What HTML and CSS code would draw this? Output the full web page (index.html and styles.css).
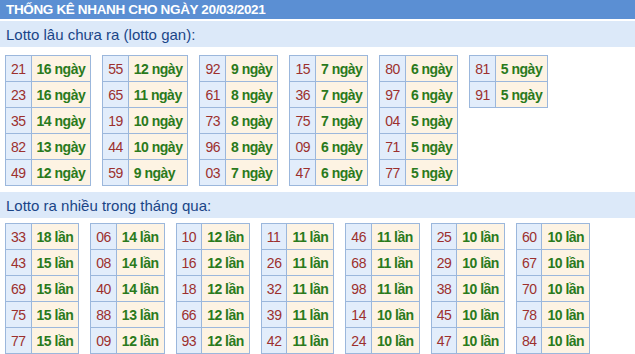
FILE: index.html
```html
<!DOCTYPE html>
<html lang="vi">
<head>
<meta charset="utf-8">
<title>Thống kê nhanh</title>
<link rel="stylesheet" href="styles.css">
</head>
<body>
<div class="header">THỐNG KÊ NHANH CHO NGÀY 20/03/2021</div>
<div class="band">Lotto lâu chưa ra (lotto gan):</div>
<div class="tables tables-gan">
  <table><tr><td class="n">21</td><td class="v">16 ngày</td></tr><tr><td class="n">23</td><td class="v">16 ngày</td></tr><tr><td class="n">35</td><td class="v">14 ngày</td></tr><tr><td class="n">82</td><td class="v">13 ngày</td></tr><tr><td class="n">49</td><td class="v">12 ngày</td></tr></table>
  <table><tr><td class="n">55</td><td class="v">12 ngày</td></tr><tr><td class="n">65</td><td class="v">11 ngày</td></tr><tr><td class="n">19</td><td class="v">10 ngày</td></tr><tr><td class="n">44</td><td class="v">10 ngày</td></tr><tr><td class="n">59</td><td class="v">9 ngày</td></tr></table>
  <table><tr><td class="n">92</td><td class="v">9 ngày</td></tr><tr><td class="n">61</td><td class="v">8 ngày</td></tr><tr><td class="n">73</td><td class="v">8 ngày</td></tr><tr><td class="n">96</td><td class="v">8 ngày</td></tr><tr><td class="n">03</td><td class="v">7 ngày</td></tr></table>
  <table><tr><td class="n">15</td><td class="v">7 ngày</td></tr><tr><td class="n">36</td><td class="v">7 ngày</td></tr><tr><td class="n">75</td><td class="v">7 ngày</td></tr><tr><td class="n">09</td><td class="v">6 ngày</td></tr><tr><td class="n">47</td><td class="v">6 ngày</td></tr></table>
  <table><tr><td class="n">80</td><td class="v">6 ngày</td></tr><tr><td class="n">97</td><td class="v">6 ngày</td></tr><tr><td class="n">04</td><td class="v">5 ngày</td></tr><tr><td class="n">71</td><td class="v">5 ngày</td></tr><tr><td class="n">77</td><td class="v">5 ngày</td></tr></table>
  <table><tr><td class="n">81</td><td class="v">5 ngày</td></tr><tr><td class="n">91</td><td class="v">5 ngày</td></tr></table>
</div>
<div class="band">Lotto ra nhiều trong tháng qua:</div>
<div class="tables tables-nhieu">
  <table><tr><td class="n">33</td><td class="v">18 lần</td></tr><tr><td class="n">43</td><td class="v">15 lần</td></tr><tr><td class="n">69</td><td class="v">15 lần</td></tr><tr><td class="n">75</td><td class="v">15 lần</td></tr><tr><td class="n">77</td><td class="v">15 lần</td></tr></table>
  <table><tr><td class="n">06</td><td class="v">14 lần</td></tr><tr><td class="n">08</td><td class="v">14 lần</td></tr><tr><td class="n">40</td><td class="v">14 lần</td></tr><tr><td class="n">88</td><td class="v">13 lần</td></tr><tr><td class="n">09</td><td class="v">12 lần</td></tr></table>
  <table><tr><td class="n">10</td><td class="v">12 lần</td></tr><tr><td class="n">16</td><td class="v">12 lần</td></tr><tr><td class="n">18</td><td class="v">12 lần</td></tr><tr><td class="n">66</td><td class="v">12 lần</td></tr><tr><td class="n">93</td><td class="v">12 lần</td></tr></table>
  <table><tr><td class="n">11</td><td class="v">11 lần</td></tr><tr><td class="n">26</td><td class="v">11 lần</td></tr><tr><td class="n">32</td><td class="v">11 lần</td></tr><tr><td class="n">39</td><td class="v">11 lần</td></tr><tr><td class="n">42</td><td class="v">11 lần</td></tr></table>
  <table><tr><td class="n">46</td><td class="v">11 lần</td></tr><tr><td class="n">68</td><td class="v">11 lần</td></tr><tr><td class="n">98</td><td class="v">11 lần</td></tr><tr><td class="n">14</td><td class="v">10 lần</td></tr><tr><td class="n">24</td><td class="v">10 lần</td></tr></table>
  <table><tr><td class="n">25</td><td class="v">10 lần</td></tr><tr><td class="n">29</td><td class="v">10 lần</td></tr><tr><td class="n">38</td><td class="v">10 lần</td></tr><tr><td class="n">45</td><td class="v">10 lần</td></tr><tr><td class="n">47</td><td class="v">10 lần</td></tr></table>
  <table><tr><td class="n">60</td><td class="v">10 lần</td></tr><tr><td class="n">67</td><td class="v">10 lần</td></tr><tr><td class="n">70</td><td class="v">10 lần</td></tr><tr><td class="n">78</td><td class="v">10 lần</td></tr><tr><td class="n">84</td><td class="v">10 lần</td></tr></table>
</div>
</body>
</html>
```
FILE: styles.css
```css
html, body {
  margin: 0;
  padding: 0;
  background: #ffffff;
  font-family: "Liberation Sans", Arial, sans-serif;
}

.header {
  height: 19px;
  line-height: 20px;
  padding-left: 6px;
  background: #5b8fd3;
  color: #ffffff;
  font-size: 13.5px;
  font-weight: bold;
  letter-spacing: -0.35px;
}

.band {
  margin-top: 2px;
  height: 26px;
  line-height: 27px;
  padding-left: 6px;
  background: #dce9f9;
  color: #1a4587;
  font-size: 15px;
}

.tables {
  display: flex;
  align-items: flex-start;
  gap: 11px;
  padding: 0 5px;
}

.tables-gan {
  padding-top: 8px;
  padding-bottom: 4px;
}

.tables-nhieu {
  padding-top: 5px;
}

table {
  border-collapse: collapse;
  border: 1px solid #9bb7dc;
  font-size: 14px;
  letter-spacing: -0.5px;
}

td {
  border: 1px solid #9bb7dc;
  height: 25px;
  padding: 0 5px;
  white-space: nowrap;
}

.n {
  background: #e2edfb;
  color: #9c302e;
}

.v {
  background: #fdf3e3;
  color: #2a7a1c;
  font-weight: bold;
}
```
